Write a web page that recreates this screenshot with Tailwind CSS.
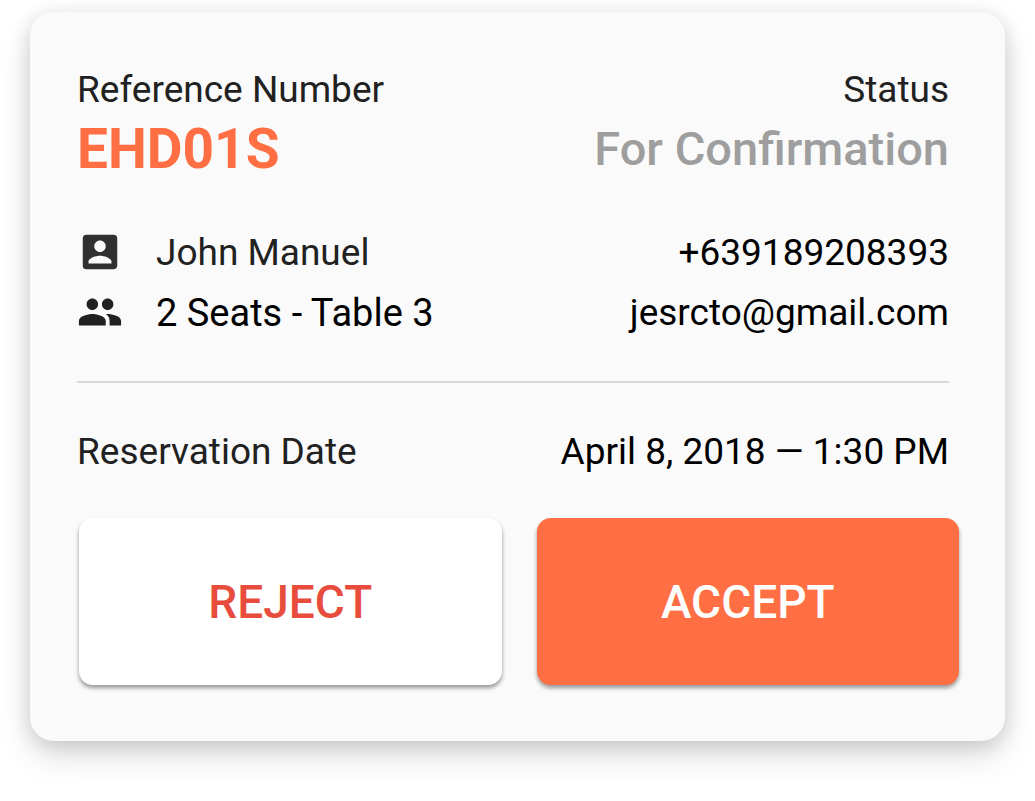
<!DOCTYPE html>
<html lang="en">
<head>
<meta charset="utf-8">
<meta name="viewport" content="width=device-width, initial-scale=1">
<title>Reservation</title>
<script src="https://cdn.jsdelivr.net/npm/@tailwindcss/browser@4"></script>
</head>
<body class="min-h-screen bg-white px-[30px] pt-3 font-[Roboto,sans-serif] text-[37px] leading-[44px] text-[#212121]">
<main class="rounded-3xl bg-[#fafafa] pr-14 pl-[47px] pt-14 pb-14 shadow-[0_16px_32px_rgba(0,0,0,0.12),0_4px_20px_rgba(0,0,0,0.14)]">
  <dl class="flex justify-between">
    <div>
      <dt>Reference Number</dt>
      <dd class="text-[55px] leading-[74px] font-bold text-[#ff6f43]">EHD01S</dd>
    </div>
    <div class="text-right">
      <dt>Status</dt>
      <dd class="text-[47px] leading-[74px] font-medium text-[#9e9e9e]">For Confirmation</dd>
    </div>
  </dl>
  <div class="mt-[43px] flex flex-col gap-3 leading-[48px]">
    <div class="flex justify-between">
      <div class="flex gap-[33px]">
        <svg class="size-[46px]" viewBox="0 0 24 24" fill="#303030" aria-hidden="true"><path d="M3 5v14a2 2 0 0 0 2 2h14c1.100 0 2-.9 2-2V5a2 2 0 0 0-2-2H5a2 2 0 0 0-2 2zm12 4c0 1.660-1.340 3-3 3s-3-1.340-3-3 1.340-3 3-3 3 1.340 3 3zm-9 8c0-2 4-3.100 6-3.100s6 1.100 6 3.100v1H6v-1z"/></svg>
        <span>John Manuel</span>
      </div>
      <span class="text-black">+639189208393</span>
    </div>
    <div class="flex justify-between text-black">
      <div class="flex gap-[33px]">
        <svg class="size-[46px]" viewBox="0 0 24 24" fill="#212121" aria-hidden="true"><path d="M16 11c1.660 0 2.990-1.340 2.990-3S17.660 5 16 5c-1.660 0-3 1.340-3 3s1.340 3 3 3zm-8 0c1.660 0 2.990-1.340 2.990-3S9.660 5 8 5C6.340 5 5 6.340 5 8s1.340 3 3 3zm0 2c-2.330 0-7 1.170-7 3.500V19h14v-2.500c0-2.330-4.670-3.500-7-3.500zm8 0c-.29 0-.62.020-.97.050 1.160.84 1.970 1.970 1.970 3.450V19h6v-2.500c0-2.330-4.670-3.500-7-3.500z"/></svg>
        <span class="text-[38px]">2 Seats - Table 3</span>
      </div>
      <span>jesrcto@gmail.com</span>
    </div>
  </div>
  <hr class="mt-11 border-t-2 border-[#d9d9d9]">
  <div class="mt-[47px] flex justify-between">
    <span>Reservation Date</span>
    <time class="text-black" datetime="2018-04-08T13:30">April 8, 2018 — 1:30 PM</time>
  </div>
  <div class="mt-11 -mr-2.5 ml-0.5 grid grid-cols-2 gap-[35px] text-[46px] font-medium">
    <button type="button" class="h-[167px] rounded-[14px] bg-white text-[#e74c3c] shadow-[0_3px_4px_rgba(0,0,0,0.4)]">REJECT</button>
    <button type="button" class="h-[167px] rounded-[14px] bg-[#ff6f43] text-white shadow-[0_3px_4px_rgba(0,0,0,0.4)]">ACCEPT</button>
  </div>
</main>
</body>
</html>
